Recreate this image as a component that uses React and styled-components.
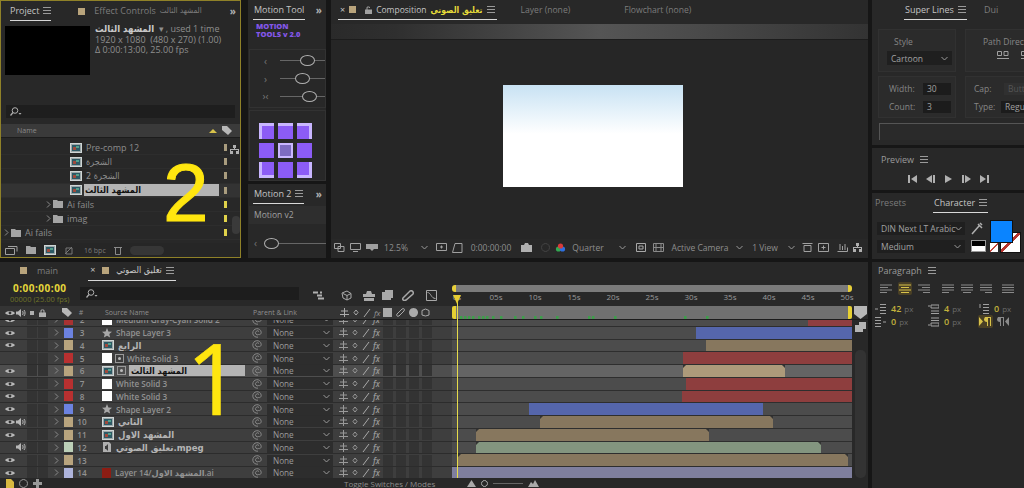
import React from 'react';
import styled, { createGlobalStyle } from 'styled-components';

const GlobalStyle = createGlobalStyle`
  html, body { margin: 0; padding: 0; background: #161616; }
  body { font-family: "Open Sans", "DejaVu Sans", sans-serif; font-size: 9px; color: #a8a8a8; }
  * { box-sizing: border-box; }
  svg { flex: none; }
`;

const Page = styled.div`
  position: relative;
  width: 1024px;
  height: 488px;
  display: flex;
  overflow: hidden;
  background: #161616;
`;
const LeftArea = styled.div`
  width: 868px;
  display: flex;
  flex-direction: column;
`;
const TopRow = styled.div`
  height: 258px;
  display: flex;
`;
const Panel = styled.div`
  background: #282828;
  display: flex;
  flex-direction: column;
  position: relative;
  overflow: hidden;
  height: ${p => (p.$h ? `${p.$h}px` : 'auto')};
  ${p => !p.$h && 'flex: 1;'}
  ${p => p.$active && 'border: 1px solid #8f8128;'}
`;
const TabBar = styled.div`
  height: 20px;
  flex: none;
  display: flex;
  align-items: flex-start;
  padding-left: ${p => p.$pl || 0}px;
  position: relative;
`;
const Tab = styled.div`
  height: 20px;
  line-height: 20px;
  margin-left: ${p => p.$ml || 0}px;
  padding: 0 ${p => p.$pad || 0}px;
  white-space: nowrap;
  display: flex;
  align-items: center;
  gap: 4px;
  font-size: ${p => p.$fs || 9}px;
  color: ${p => (p.$on ? '#c4c4c4' : '#7c7c7c')};
  border-bottom: ${p => (p.$on ? '1.5px solid #d8d8d8' : 'none')};
`;
const PlainTitle = styled.div`
  height: ${p => p.$h}px;
  flex: none;
  display: flex;
  align-items: center;
  gap: 6px;
  padding-left: ${p => p.$pl}px;
  color: #9a9a9a;
`;
const More = styled.span`
  position: absolute;
  right: 5px;
  top: 3px;
  font-size: 10px;
  font-weight: 700;
  letter-spacing: -1px;
  color: #b0b0b0;
`;
const Burger = () => (
  <svg width="8" height="7" viewBox="0 0 8 7"><path d="M0 .5h8M0 3.5h8M0 6.5h8" stroke="#9a9a9a" strokeWidth="1" /></svg>
);
const Swatch = styled.span`
  display: inline-block;
  width: ${p => p.$s || 7}px;
  height: ${p => p.$s || 7}px;
  margin-left: ${p => p.$ml || 0}px;
  background: ${p => p.$c};
  flex: none;
`;
const Arabic = styled.span`
  font-family: "DejaVu Sans Condensed", "DejaVu Sans", sans-serif;
  font-weight: ${p => (p.$bold ? 700 : 400)};
  font-size: ${p => p.$size || 9}px;
  color: ${p => p.$c || 'inherit'};
  margin-left: ${p => p.$ml || 0}px;
`;

/* ---------- little drawings ---------- */
const Comp = () => (
  <svg width="12" height="10" viewBox="0 0 12 10">
    <rect x=".5" y=".5" width="11" height="9" fill="#9aa6a8" stroke="#cfd6d6" />
    <rect x="2" y="2" width="8" height="6" fill="#2d5a66" />
    <rect x="3" y="4" width="3" height="3" fill="#a04a3c" />
    <rect x="6" y="3" width="3" height="2" fill="#54a08c" />
  </svg>
);
const Folder = () => (
  <svg width="10" height="8" viewBox="0 0 10 8"><path d="M0 0h4l1 1h5v7H0z" fill="#a4a4a4" /></svg>
);
const Chevron = ({ c = '#8a8a8a', s = 5 }) => (
  <svg width={s} height={s + 2} viewBox="0 0 5 7"><path d="M1 .5 4 3.5 1 6.5" fill="none" stroke={c} strokeWidth="1" /></svg>
);
const Down = ({ c = '#9a9a9a' }) => (
  <svg width="7" height="5" viewBox="0 0 7 5"><path d="M.5 1 3.5 4 6.5 1" fill="none" stroke={c} strokeWidth="1" /></svg>
);
const Eye = () => (
  <svg width="10" height="6" viewBox="0 0 10 6"><path d="M0 3C2 .2 8 .2 10 3 8 5.8 2 5.8 0 3z" fill="#b8b8b8" /><circle cx="5" cy="3" r="1.4" fill="#333" /></svg>
);
const Speaker = () => (
  <svg width="10" height="8" viewBox="0 0 10 8"><path d="M0 2.5h2L5 0v8L2 5.5H0z" fill="#b8b8b8" /><path d="M6.5 2c.8 1 .8 3 0 4M8 1c1.4 1.7 1.4 4.3 0 6" fill="none" stroke="#b8b8b8" /></svg>
);
const StarIcon = () => (
  <svg width="10" height="10" viewBox="0 0 10 10"><path d="M5 0 6.4 3.4 10 3.7 7.3 6 8.1 9.6 5 7.7 1.9 9.6 2.7 6 0 3.7 3.6 3.4z" fill="#a8a8a8" /></svg>
);
const Spiral = () => (
  <svg width="10" height="10" viewBox="0 0 10 10"><path d="M7 3.5A2 2 0 1 0 6.6 6.5C8 7 9.4 5.8 9.2 4.2 8.9 1.8 6.8.5 4.6.7 2.3 1 .6 3 .8 5.3 1 7.8 3.3 9.5 6 9.2" fill="none" stroke="#8e8e8e" strokeWidth=".9" /></svg>
);
const Glyph = ({ w = 11, h = 9, d, c = '#a0a0a0', fill, sw = 1 }) => (
  <svg width={w} height={h} viewBox={`0 0 ${w} ${h}`}><path d={d} fill={fill || 'none'} stroke={fill ? 'none' : c} strokeWidth={sw} /></svg>
);
const SearchGlyph = () => (
  <svg width="12" height="9" viewBox="0 0 12 9"><circle cx="5" cy="3.5" r="2.8" fill="none" stroke="#b0b0b0" /><path d="M3 5.5 .5 8.5" stroke="#b0b0b0" strokeWidth="1.2" /><path d="M8.5 6h3L10 7.8z" fill="#b0b0b0" /></svg>
);
const TagIcon = () => <Glyph w={10} h={9} fill="#b8b8b8" d="M0 0h5l5 5-4 4-6-5z" />;
const FlowIcon = () => <Glyph w={9} h={9} fill="#b0b0b0" d="M3 0h3v3H5v1h4v2h0v3H6V6h2V5H1v1h2v3H0V6h0V4h4V3H3z" />;
const Marker = styled.span`
  position: absolute;
  font-family: ${p => p.$font}, sans-serif;
  color: #ffe60f;
  -webkit-text-stroke: ${p => p.$stroke}px #ffe60f;
  left: ${p => p.$x}px;
  top: ${p => p.$y}px;
  font-size: ${p => p.$size}px;
  line-height: 1;
  pointer-events: none;
`;

/* ---------- project ---------- */
const ProjectPanel = styled(Panel)`
  width: 241px;
`;
const ProjectInfo = styled.div`
  height: 84px;
  display: flex;
  padding: 5px 0 0 4px;
  gap: 5px;
  flex: none;
`;
const Thumb = styled.div`
  width: 85px;
  height: 49px;
  background: #000;
`;
const InfoText = styled.div`
  line-height: 10.5px;
  font-size: 9px;
  color: #8f8f8f;
  margin-top: -2px;
`;
const SearchBox = styled.div`
  height: 13px;
  margin: 0 5px;
  flex: none;
  background: #1e1e1e;
  display: flex;
  align-items: center;
  padding-left: 4px;
`;
const NameHead = styled.div`
  height: 14px;
  margin-top: 6px;
  flex: none;
  background: #3a3a3a;
  border-bottom: 1px solid #1c1c1c;
  display: flex;
  align-items: center;
  justify-content: space-between;
  padding: 0 8px 0 16px;
  font-size: 7px;
  color: #8a8a8a;
`;
const HeadIcons = styled.span`
  display: flex;
  align-items: center;
  gap: 5px;
`;
const ProjectList = styled.div`
  flex: 1;
  padding-top: 3px;
  position: relative;
  overflow: hidden;
`;
const ProjectRow = styled.div`
  height: 14.2px;
  display: flex;
  align-items: center;
  gap: 2px;
  padding-left: ${p => p.$indent}px;
  background: ${p => (p.$sel ? '#333' : 'transparent')};
  color: #8d8d8d;
  font-size: 9px;
  position: relative;
  border-bottom: 1px solid #2d2d2d;
`;
const RowName = styled.span`
  margin-left: 2px;
  white-space: nowrap;
  ${p => p.$sel && 'background:#b4b4b4;color:#111;width:135px;height:12px;line-height:12px;padding-left:1px;margin-left:0;'}
`;
const ChipCol = styled.span`
  position: absolute;
  left: 223px;
  top: 3px;
  width: 3px;
  height: 7px;
  background: ${p => p.$c};
`;
const FlowMark = styled.span`
  position: absolute;
  left: 229px;
  top: 3px;
`;
const ProjectFoot = styled.div`
  height: 14px;
  flex: none;
  display: flex;
  align-items: center;
  gap: 8px;
  padding-left: 4px;
  font-size: 7px;
  color: #7a7a7a;
  background: #262626;
`;
const Pill = styled.span`
  width: 34px;
  height: 9px;
  border-radius: 5px;
  background: #363636;
`;
const Scroll = styled.span`
  position: absolute;
  right: 0;
  top: 78px;
  width: 8px;
  height: 18px;
  border-radius: 4px;
  background: #3a3a3a;
`;

/* ---------- motion tools ---------- */
const MotionCol = styled.div`
  width: 78px;
  margin-left: 7px;
  height: 258px;
  display: flex;
  flex-direction: column;
  gap: 3px;
`;
const MotionBrand = styled.div`
  height: 29px;
  padding: 2px 0 0 8px;
  font-size: 7.5px;
  line-height: 8px;
  font-weight: 800;
  color: #8457e8;
  flex: none;
`;
const SliderBox = styled.div`
  height: 59px;
  margin-left: 1px;
  border: 1px solid #323232;
  display: flex;
  flex-direction: column;
  justify-content: space-evenly;
  padding-left: 8px;
  flex: none;
`;
const SliderLine = styled.div`
  display: flex;
  align-items: center;
  height: 14px;
  font-size: 10px;
  color: #777;
  gap: 7px;
  margin-top: ${p => p.$mt || 0}px;
  padding-left: ${p => p.$pl || 0}px;
  span:first-child { width: 15px; text-align: center; flex: none; }
`;
const Track = styled.div`
  flex: 1;
  height: 1px;
  background: #666;
  position: relative;
`;
const Knob = styled.span`
  position: absolute;
  left: ${p => p.$x}px;
  top: -5px;
  width: 11px;
  height: 11px;
  border-radius: 50%;
  background: #282828;
  border: 1.5px solid #b0b0b0;
`;
const GridBox = styled.div`
  margin: 2px 0 0 1px;
  border: 1px solid #323232;
  display: grid;
  grid-template-columns: repeat(3, 15px);
  grid-auto-rows: 15.5px;
  gap: 4.2px;
  padding: 12px 0 0 9px;
  flex: 1;
`;
const Pad = styled.span`
  background: #8c5cf5;
  box-shadow: ${p => p.$inner};
  ${p => p.$center && 'background:#7e6cc0;border:2.5px solid #c9b6ff;'}
`;
const V2Box = styled.div`
  height: 18px;
  line-height: 18px;
  padding-left: 5px;
  margin: 2px 0 0 1px;
  background: #2e2e2e;
  color: #a0a0a0;
  font-size: 8.5px;
  flex: none;
`;

/* ---------- composition ---------- */
const CompPanel = styled(Panel)`
  flex: none;
  width: 537px;
  margin-left: 5px;
`;
const TimeStrip = styled.div`
  height: 16px;
  margin-top: 4px;
  flex: none;
  background: linear-gradient(90deg, #2a2a2a 0%, #2f2f2f 12%, #555 50%, #4a4a4a 68%, #333 100%);
  border-bottom: 1px solid #1c1c1c;
`;
const Viewer = styled.div`
  flex: 1;
  background: #262626;
  display: flex;
  padding: 45px 0 0 172px;
`;
const Frame = styled.div`
  width: 180px;
  height: 102px;
  background: linear-gradient(180deg, #c8e2f3 0%, #e6f2fa 26%, #ffffff 48%);
`;
const CompTools = styled.div`
  height: 17px;
  flex: none;
  display: flex;
  align-items: center;
  background: #282828;
  font-size: 8.5px;
  color: #8e8e8e;
  margin-bottom: 2px;
`;
const Slot = styled.span`
  display: inline-flex;
  align-items: center;
  justify-content: center;
  flex: none;
  width: ${p => p.$w}px;
  white-space: nowrap;
`;

/* ---------- timeline ---------- */
const TimelinePanel = styled(Panel)`
  margin-top: 4px;
`;
const TimeTabs = styled.div`
  height: 17px;
  flex: none;
  display: flex;
  align-items: center;
  padding-left: 20px;
`;
const TimeControls = styled.div`
  height: 27px;
  flex: none;
  display: flex;
`;
const TimeCode = styled.div`
  width: 80px;
  padding-left: 10px;
  padding-top: 3px;
  div:first-child { color: #e4d63b; font-weight: 700; font-size: 10px; line-height: 12px; letter-spacing: .5px; padding-left: 3px; }
  div:last-child { color: #6f7428; font-size: 7.5px; line-height: 10px; }
`;
const TimeSearch = styled.div`
  width: 219px;
  height: 13px;
  margin-top: 8px;
  background: #1d1d1d;
  display: flex;
  align-items: center;
  padding-left: 6px;
`;
const ToolRow = styled.div`
  width: 153px;
  display: flex;
  align-items: center;
  padding: 6px 0 0 14px;
`;
const ToolGap = styled.span`
  width: ${p => p.$w}px;
  flex: none;
`;
const NavCol = styled.div`
  width: 400px;
  padding-top: 6px;
  position: relative;
`;
const NavBar = styled.div`
  height: 7px;
  background: #7b7b7b;
  border-left: 4px solid #e7cf3a;
  border-right: 4px solid #e7cf3a;
  border-radius: 3px;
`;
const Ruler = styled.div`
  display: flex;
  margin-left: -14.5px;
`;
const Tick = styled.span`
  width: 39px;
  flex: none;
  text-align: center;
  font-size: 8px;
  line-height: 10px;
  color: #9a9a9a;
`;
const HeadRow = styled.div`
  height: 14px;
  flex: none;
  display: flex;
  background: #3a3a3a;
  border-bottom: 1px solid #1b1b1b;
`;
const HeadLeft = styled.div`
  width: 452px;
  display: flex;
  align-items: center;
  padding-left: 5px;
  font-size: 7px;
  color: #8f8f8f;
  background: #343434;
`;
const WorkBar = styled.div`
  width: 400px;
  height: 13px;
  background: #707070;
  border-left: 4px solid #e6d033;
  border-right: 4px solid #e6d033;
  border-radius: 2px;
  display: flex;
  align-items: flex-end;
`;
const HeadEnd = styled.div`
  flex: 1;
  background: #282828;
  display: flex;
  justify-content: center;
`;
const RowsWrap = styled.div`
  flex: 1;
  display: flex;
  min-height: 0;
`;
const Rows = styled.div`
  width: 852px;
  overflow: hidden;
  background: #2c2c2c;
`;
const Row = styled.div`
  height: 12.75px;
  display: flex;
  font-size: 8.2px;
  font-weight: 600;
  color: #929292;
  ${p => p.$first && 'margin-top:-6px;'}
`;
const RowLeft = styled.div`
  width: 452px;
  flex: none;
  display: flex;
  align-items: center;
  background: ${p => (p.$sel ? '#4e4e4e' : '#3e3e3e')};
  border-bottom: 1px solid #2c2c2c;
  padding-left: 5px;
`;
const Cell = styled.span`
  display: inline-flex;
  align-items: center;
  justify-content: ${p => (p.$start ? 'flex-start' : 'center')};
  flex: none;
  width: ${p => p.$w}px;
  height: 100%;
  white-space: nowrap;
  overflow: hidden;
  ${p => p.$dark && 'background:#333;margin-right:1px;height:11px;'}
`;
const NameCell = styled(Cell)`
  gap: 4px;
`;
const Highlight = styled.span`
  background: #b4b4b4;
  color: #111;
  width: 120px;
  height: 11px;
  line-height: 11px;
  padding-left: 2px;
  flex: none;
`;
const LabelChip = styled.span`
  width: 9px;
  height: 10px;
  background: ${p => p.$c};
`;
const Solid = styled.span`
  width: 10px;
  height: 10px;
  background: #fff;
  flex: none;
`;
const SolidMark = styled.span`
  width: 9px;
  height: 9px;
  border: 1px solid #999;
  margin: 0 -1px;
  flex: none;
  display: inline-flex;
  align-items: center;
  justify-content: center;
  &::after { content: ""; width: 3px; height: 3px; background: #bbb; border-radius: 50%; }
`;
const ParentSelect = styled.span`
  width: 66px;
  height: 11px;
  background: #2d2d2d;
  margin-left: 5px;
  padding: 0 3px 0 6px;
  display: flex;
  align-items: center;
  justify-content: space-between;
  flex: none;
  color: #9c9c9c;
  font-weight: 400;
`;
const Switches = styled.span`
  display: flex;
  align-items: center;
  gap: 3px;
  margin-left: 6px;
  color: #999;
  font-style: italic;
  font-size: 8px;
  flex: none;
`;
const SwitchBox = styled.span`
  width: 10px;
  height: 11px;
  background: #333;
  flex: none;
`;
const TrackCell = styled.div`
  width: 400px;
  flex: none;
  background: ${p => (p.$sel ? '#646464' : '#4c4c4c')};
  border-bottom: 1px solid #2e2e2e;
  display: flex;
`;
const Clip = styled.div`
  position: relative;
  height: 100%;
  margin-left: ${p => p.$from}px;
  width: ${p => p.$len}px;
  background: ${p => p.$c};
  border-radius: ${p => (p.$round ? '3px 3px 0 0' : '0')};
  ${p => p.$round && `
    &::before, &::after {
      content: "";
      position: absolute;
      top: 0;
      border-top: 3px solid #333;
    }
    &::before { left: 0; border-right: 3px solid transparent; }
    &::after { right: 0; border-left: 3px solid transparent; }
  `}
`;
const SideScroll = styled.div`
  flex: 1;
  background: #282828;
  padding: 2px 2px 0;
  display: flex;
  flex-direction: column;
  align-items: center;
`;
const Thumb2 = styled.span`
  width: 11px;
  flex: 1;
  margin: 18px 0 0;
  border-radius: 5px;
  background: #333;
`;
const BottomBar = styled.div`
  height: 10px;
  flex: none;
  display: flex;
  align-items: center;
  padding-left: 6px;
  gap: 5px;
  font-size: 8px;
  color: #888;
  background: #282828;
`;
const ToggleLabel = styled.span`
  margin-left: 297px;
  width: 118px;
  flex: none;
  color: #8e8e8e;
`;
const ZoomLine = styled.span`
  width: 30px;
  height: 1px;
  background: #666;
`;
const Playhead = styled.span`
  position: absolute;
  left: 457px;
  top: 295px;
  width: 1px;
  height: 183px;
  background: #e6db4a;
  &::before {
    content: "";
    position: absolute;
    left: -4px;
    top: 0;
    border-left: 4.5px solid transparent;
    border-right: 4.5px solid transparent;
    border-top: 9px solid #e6cc33;
  }
`;

/* ---------- right column ---------- */
const RightCol = styled.div`
  flex: 1;
  margin-left: 4px;
  display: flex;
  flex-direction: column;
  gap: 3px;
`;
const SuperBody = styled.div`
  display: grid;
  grid-template-columns: 78px 78px;
  column-gap: 9px;
  row-gap: 4px;
  padding: 9px 0 0 6px;
`;
const GroupBox = styled.div`
  height: ${p => p.$h}px;
  background: #2b2b2b;
  border: 1px solid #313131;
  padding: ${p => p.$pad || '6px 0 0 8px'};
  font-size: 8.5px;
  color: #868686;
  overflow: hidden;
  white-space: nowrap;
`;
const GroupTitle = styled.div`
  margin-left: ${p => p.$ml}px;
  line-height: 12px;
`;
const SelectBox = styled.div`
  height: ${p => p.$h || 14}px;
  width: ${p => p.$w}px;
  margin-top: ${p => p.$mt || 0}px;
  background: #1f1f1f;
  display: flex;
  align-items: center;
  justify-content: space-between;
  padding: 0 4px;
  color: #a2a2a2;
  font-size: 8.5px;
  white-space: nowrap;
  flex: none;
`;
const FieldRow = styled.div`
  display: flex;
  align-items: center;
  height: 13px;
  margin-bottom: 5px;
`;
const FieldLabel = styled.span`
  width: ${p => p.$w}px;
  flex: none;
`;
const FieldInput = styled.span`
  width: 28px;
  height: 12px;
  line-height: 12px;
  background: ${p => (p.$off ? '#303030' : '#1c1c1c')};
  padding-left: 4px;
  color: ${p => (p.$off ? '#555' : '#a0a0a0')};
  flex: none;
`;
const DirIcons = styled.div`
  display: flex;
  gap: 12px;
  margin: 3px 0 0 14px;
`;
const TextBar = styled.div`
  margin: 5px 0 0 7px;
  height: 17px;
  border-top: 1px solid #555;
  border-left: 1px solid #555;
  background: #2a2a2a;
`;
const PreviewBody = styled.div`
  display: flex;
  gap: 9px;
  padding: 5px 0 0 36px;
  align-items: center;
`;
const CharBody = styled.div`
  padding: 9px 0 0 5px;
  display: grid;
  grid-template-columns: 94px 20px 40px;
  grid-template-rows: 13px 13px;
  row-gap: 5px;
  position: relative;
  height: 45px;
`;
const FillBox = styled.span`
  position: absolute;
  left: 118px;
  top: 7px;
  width: 23px;
  height: 23px;
  background: #0a84ff;
  border: 1px solid #111;
  z-index: 1;
`;
const StrokeBox = styled.span`
  position: absolute;
  left: 128px;
  top: 19px;
  width: 21px;
  height: 21px;
  background: linear-gradient(135deg, #fff 44%, #b8352f 44%, #b8352f 54%, #fff 54%);
  border: 1px solid #111;
`;
const NoneBox = styled.span`
  position: absolute;
  left: 118px;
  top: 30px;
  width: 8px;
  height: 9px;
  background: linear-gradient(135deg, #fff 42%, #c2473f 42%, #c2473f 56%, #fff 56%);
`;
const Contrast = styled.span`
  width: 15px;
  height: 12px;
  border: 1px solid #999;
  background: linear-gradient(180deg, #000 50%, #fff 50%);
`;
const ParaIcons = styled.div`
  display: flex;
  align-items: center;
  padding: 3px 0 0 4px;
`;
const ParaSlot = styled.span`
  display: inline-flex;
  align-items: center;
  justify-content: center;
  width: 19px;
  flex: none;
  margin-left: ${p => p.$ml || 0}px;
`;
const AlignOn = styled.span`
  display: inline-flex;
  background: #4a4025;
  border-radius: 2px;
  padding: 2px 1px;
`;
const ParaGrid = styled.div`
  display: grid;
  grid-template-columns: 53px 50px 50px;
  grid-auto-rows: 13px;
  padding: 7px 0 0 3px;
  font-size: 8px;
  color: #6a6a6a;
`;
const ParaField = styled.span`
  display: flex;
  align-items: center;
  gap: 3px;
  b { color: #c2b13c; font-weight: 600; font-size: 9px; margin-left: 2px; }
`;

const ticks = ['0s', '05s', '10s', '15s', '20s', '25s', '30s', '35s', '40s', '45s', '50s'];
const corner = ['inset 3px 3px 0 #c9b6ff', 'inset 0 3px 0 #c9b6ff', 'inset -3px 3px 0 #c9b6ff', 'none', 'none', 'none', 'inset 3px -3px 0 #c9b6ff', 'none', 'inset -3px -3px 0 #c9b6ff'];
const greenMarks = [4, 8, 12, 16, 22, 26, 30, 36, 44, 58, 66, 78, 84, 100, 132, 136, 158, 228, 250];

const layers = [
  { n: 2, label: '#a83232', vis: 1, name: 'Medium Gray-Cyan Solid 2', icon: 'solid', clip: [356, 44, '#8f3e40'], first: true },
  { n: 3, label: '#6c82e0', vis: 1, name: 'Shape Layer 3', icon: 'star', clip: [244, 156, '#5566ac'] },
  { n: 4, label: '#b8a47e', vis: 1, name: 'الرابع', icon: 'comp', big: true, clip: [254, 146, '#87775e'] },
  { n: 5, label: '#b83030', vis: 0, name: 'White Solid 3', icon: 'solidmark', clip: [231, 169, '#8e3e3e'] },
  { n: 6, label: '#b8a47e', vis: 1, name: 'المشهد الثالث', icon: 'compmark', sel: true, clip: [231, 102, '#ad9a7a', 1] },
  { n: 7, label: '#b83030', vis: 1, name: 'White Solid 3', icon: 'solid', clip: [234, 166, '#8e3e3e'] },
  { n: 8, label: '#b83030', vis: 1, name: 'White Solid 3', icon: 'solid', clip: [230, 170, '#8e3e3e'] },
  { n: 9, label: '#6c82e0', vis: 1, name: 'Shape Layer 2', icon: 'star', clip: [77, 234, '#5566ac'] },
  { n: 10, label: '#b8a47e', vis: 1, audio: 1, name: 'الثاني', icon: 'comp', big: true, clip: [88, 233, '#87775e', 1] },
  { n: 11, label: '#b8a47e', vis: 1, name: 'المشهد الاول', icon: 'comp', big: true, clip: [24, 233, '#87775e', 1] },
  { n: 12, label: '#bcd0b8', audio: 1, name: 'تعليق الصوتي.mpeg', icon: 'audio', big: true, clip: [24, 345, '#83957f', 1] },
  { n: 13, label: '#b8a47e', vis: 1, name: '', icon: '', clip: [6, 390, '#87775e', 1] },
  { n: 14, label: '#aeb4dc', vis: 1, name: 'Layer 14/المشهد الاول.ai', icon: 'ai', clip: [0, 400, '#7f7f9e'] },
];

function LayerIcon({ kind }) {
  if (kind === 'star') return <StarIcon />;
  if (kind === 'comp') return <Comp />;
  if (kind === 'solid') return <Solid />;
  if (kind === 'solidmark') return <><Solid /><SolidMark /></>;
  if (kind === 'compmark') return <><Comp /><SolidMark /></>;
  if (kind === 'audio') return <Glyph w={10} h={10} fill="#b0b0b0" d="M1 0h6l2 2v8H1zM3 4v3h1l2 2V2L4 4z" />;
  if (kind === 'ai') return <Glyph w={9} h={10} fill="#8c1d14" d="M0 0h9v10H0z" />;
  return null;
}

function LayerRow({ l }) {
  let name = <span>{l.name}</span>;
  if (l.sel) name = <Highlight><Arabic $bold>{l.name}</Arabic></Highlight>;
  if (l.big) name = <Arabic $bold $size={9.5} $c="#b4b4b4">{l.name}</Arabic>;
  return (
    <Row $first={l.first}>
      <RowLeft $sel={l.sel}>
        <Cell $w={10}>{l.vis ? <Eye /> : null}</Cell>
        <Cell $w={11}>{l.audio ? <Speaker /> : null}</Cell>
        <Cell $w={1} />
        <Cell $w={10} $dark />
        <Cell $w={10} $dark />
        <Cell $w={14}><Chevron /></Cell>
        <Cell $w={10}><LabelChip $c={l.label} /></Cell>
        <Cell $w={18}>{l.n}</Cell>
        <Cell $w={11} />
        <NameCell $w={143} $start>
          <LayerIcon kind={l.icon} />
          {name}
        </NameCell>
        <Cell $w={6} />
        <Cell $w={11}><Spiral /></Cell>
        <ParentSelect>None <Down /></ParentSelect>
        <Switches>
          <Glyph w={9} h={9} c="#999" d="M4.5 0v9M1 3h7M0 6.5h9" />
          <Glyph w={8} h={9} c="#999" d="M4 2 6 4.5 4 7 2 4.5z" />
          <Glyph w={8} h={9} c="#aaa" d="M1 9 7 1" />
          <span>fx</span>
          <SwitchBox /><SwitchBox /><SwitchBox /><SwitchBox />
        </Switches>
      </RowLeft>
      <TrackCell $sel={l.sel}>
        <Clip $from={l.clip[0]} $len={l.clip[1]} $c={l.clip[2]} $round={l.clip[3]} />
      </TrackCell>
    </Row>
  );
}

function ProjectItem({ indent, sel, icon, chip, name, chevron, flow }) {
  return (
    <ProjectRow $indent={indent} $sel={sel}>
      {chevron && <Chevron />}
      {icon === 'folder' ? <Folder /> : <Comp />}
      <RowName $sel={sel}>{name}</RowName>
      <ChipCol $c={chip} />
      {flow && <FlowMark><FlowIcon /></FlowMark>}
    </ProjectRow>
  );
}

export default function App() {
  return (
    <Page>
      <GlobalStyle />
      <LeftArea>
        <TopRow>
          <ProjectPanel $active>
            <TabBar $pl={9}>
              <Tab $on>Project <Burger /></Tab>
              <Tab $ml={27}>
                <Swatch $c="#b9a47c" />
                <Swatch $s={1} $c="transparent" />
                Effect Controls <Arabic $size={8}>المشهد الثالث</Arabic>
              </Tab>
              <More>»</More>
            </TabBar>
            <ProjectInfo>
              <Thumb />
              <InfoText>
                <Arabic $bold $size={9.5} $c="#c8c8c8">المشهد الثالث</Arabic> &nbsp;▾ , used 1 time<br />
                1920 x 1080 &nbsp;(480 x 270) (1.00)<br />
                Δ 0:00:13:00, 25.00 fps
              </InfoText>
            </ProjectInfo>
            <SearchBox><SearchGlyph /></SearchBox>
            <NameHead>
              Name
              <HeadIcons>
                <Glyph w={8} h={7} fill="#d8c24a" d="M0 6 4 2 8 6z" />
                <TagIcon />
              </HeadIcons>
            </NameHead>
            <ProjectList>
              <ProjectItem indent={69} chip="#a99c7e" name="Pre-comp 12" flow />
              <ProjectItem indent={69} chip="#a99c7e" name={<Arabic>الشجرة</Arabic>} />
              <ProjectItem indent={69} chip="#a99c7e" name={<Arabic>الشجرة 2</Arabic>} />
              <ProjectItem indent={69} chip="#a99c7e" name={<Arabic $bold>المشهد الثالث</Arabic>} sel />
              <ProjectItem indent={45} chip="#e0d24a" name="Ai fails" icon="folder" chevron />
              <ProjectItem indent={45} chip="#e0d24a" name="imag" icon="folder" chevron />
              <ProjectItem indent={3} chip="#e0d24a" name="Ai fails" icon="folder" chevron />
              <Scroll />
            </ProjectList>
            <ProjectFoot>
              <Glyph w={13} h={9} c="#a0a0a0" d="M.5 2.5h9v6h-9zM3 .5h9v5" />
              <Folder />
              <Comp />
              <Glyph w={12} h={9} c="#777" d="M1 8 8 1M2 2h6v6H2z" />
              <span>16 bpc</span>
              <Glyph w={8} h={9} c="#8a8a8a" d="M0 1.5h8M1.5 1.5v7h5v-7" />
              <Pill />
            </ProjectFoot>
          </ProjectPanel>

          <MotionCol>
            <Panel $h={181}>
              <TabBar $pl={5}><Tab $on $pad={1}>Motion Tool</Tab><More>»</More></TabBar>
              <MotionBrand>MOTION<br />TOOLS v 2.0</MotionBrand>
              <SliderBox>
                <SliderLine><span>‹</span><Track><Knob $x={19.5} /></Track></SliderLine>
                <SliderLine><span>›</span><Track><Knob $x={14.5} /></Track></SliderLine>
                <SliderLine><span>›‹</span><Track><Knob $x={21.5} /></Track></SliderLine>
              </SliderBox>
              <GridBox>
                {corner.map((c, i) => <Pad key={i} $inner={c} $center={i === 4} />)}
              </GridBox>
            </Panel>
            <Panel>
              <TabBar $pl={5}><Tab $on $pad={1}>Motion 2 <Burger /></Tab><More>»</More></TabBar>
              <V2Box>Motion v2</V2Box>
              <SliderLine $mt={12}>
                <span>‹</span>
                <Track><Knob $x={-6} /></Track>
              </SliderLine>
            </Panel>
          </MotionCol>

          <CompPanel>
            <TabBar $pl={7}>
              <Tab $on $pad={2}>
                <span>×</span><Swatch $c="#b9a47c" />
                <Swatch $s={1} $c="transparent" />
                <Glyph w={7} h={8} fill="#a0a0a0" d="M0 3.5h7V8H0zM1.5 3.5V1.5C1.5 0 5 0 5 1.5V2H4C4 1 2.5 1 2.5 2v1.5z" />
                <span style={{ fontSize: 8.5 }}>Composition</span>
                <Arabic $bold $size={8.6} $c="#e6dc3a">تعليق الصوتي</Arabic>
                <Burger />
              </Tab>
              <Tab $ml={24} $fs={8.6}>Layer (none)</Tab>
              <Tab $ml={54} $fs={8.6}>Flowchart (none)</Tab>
            </TabBar>
            <TimeStrip />
            <Viewer><Frame /></Viewer>
            <CompTools>
              <Slot $w={16}><Glyph w={11} h={9} c="#a0a0a0" d="M.5.5h6v5h-6zM4 3.5h6v5H4z" /></Slot>
              <Slot $w={16}><Glyph w={11} h={9} c="#a0a0a0" d="M.5.5h10v6H.5zM3 8.5h5" /></Slot>
              <Slot $w={18}><Glyph w={12} h={8} fill="#a0a0a0" d="M0 0h12v5H8L6 7 4 5H0z" /></Slot>
              <Slot $w={30}>12.5%</Slot>
              <Slot $w={26}><Down /></Slot>
              <Slot $w={8}><Glyph w={11} h={10} c="#a0a0a0" d="M.5.5h10v7H.5zM5.5 2.5v3M4 4h3" /></Slot>
              <Slot $w={24}><Glyph w={11} h={10} c="#a0a0a0" d="M3 .5h7v9H.5z" /></Slot>
              <Slot $w={44}>0:00:00:00</Slot>
              <Slot $w={26}><Glyph w={11} h={9} fill="#b0b0b0" d="M0 2h3l1-2h3l1 2h3v7H0z" /></Slot>
              <Slot $w={12}><Glyph w={9} h={9} c="#444" d="M4.5.5a4 4 0 1 0 .01 0z" /></Slot>
              <Slot $w={18}>
                <svg width="11" height="10" viewBox="0 0 11 10">
                  <circle cx="3.5" cy="6" r="2.6" fill="#33a853" />
                  <circle cx="7.5" cy="6" r="2.6" fill="#2f6fe0" />
                  <circle cx="5.5" cy="3" r="2.6" fill="#d83a3a" />
                </svg>
              </Slot>
              <Slot $w={38}>Quarter</Slot>
              <Slot $w={30}><Down /></Slot>
              <Slot $w={8}><Glyph w={10} h={9} c="#a8a8a8" d="M.5.5h9v8h-9zM3 3h4v3H3z" /></Slot>
              <Slot $w={26}><Glyph w={11} h={9} c="#8a8a8a" d="M.5.5h10v8H.5zM3 .5v8M8 .5v8M.5 4.5h10" /></Slot>
              <Slot $w={58}>Active Camera</Slot>
              <Slot $w={20}><Down /></Slot>
              <Slot $w={32}>1 View</Slot>
              <Slot $w={20}><Down /></Slot>
              <Slot $w={12}><Glyph w={11} h={9} c="#a0a0a0" d="M.5.5h10M2 2.5h7v6H2z" /></Slot>
              <Slot $w={20}><Glyph w={11} h={9} c="#a0a0a0" d="M.5.5h10v8H.5zM5.5 2.5v4M3.5 4.5h4" /></Slot>
              <Slot $w={18}><Glyph w={11} h={9} c="#a0a0a0" d="M.5 8.5h10v-4M3 1v6M5.5 3v4M8 1v6" /></Slot>
              <Slot $w={12}><FlowIcon /></Slot>
            </CompTools>
          </CompPanel>
        </TopRow>

        <TimelinePanel>
          <TimeTabs>
            <Swatch $c="#b9a47c" />
            <Tab $ml={10}>main</Tab>
            <Tab $ml={30} $on $pad={2}>
              <span>×</span><Swatch $c="#b9a47c" $ml={3} />
              <Arabic $ml={3} $c="#c8c8c8">تعليق الصوتي</Arabic>
              <Burger />
            </Tab>
          </TimeTabs>
          <TimeControls>
            <TimeCode>
              <div>0:00:00:00</div>
              <div>00000 (25.00 fps)</div>
            </TimeCode>
            <TimeSearch><SearchGlyph /></TimeSearch>
            <ToolRow>
              <Glyph w={12} h={9} c="#b0b0b0" d="M0 1.5h5M7 1.5h2M4 4.5h5M5 7.5h6" sw={2} />
              <ToolGap $w={14} />
              <Glyph w={13} h={11} c="#aaa" d="M3 3 8 1 12 3.5V8L8 10 4 8zM4 3.5 8 5.5 12 3.5M8 5.5V10" />
              <ToolGap $w={11} />
              <Glyph w={12} h={10} fill="#a8a8a8" d="M4 0h4l1 3h3v3H0V3h3zM1 7h10v3H1z" />
              <ToolGap $w={7} />
              <Glyph w={11} h={11} fill="#a8a8a8" d="M3 0h8v8H9v2H0V2h3z" />
              <ToolGap $w={9} />
              <Glyph w={12} h={11} c="#a8a8a8" d="M1 8 8 1c2-1 4 1 3 3L4 10c-2 1-4 0-3-2z" sw={1.5} />
              <ToolGap $w={12} />
              <Glyph w={11} h={11} c="#a8a8a8" d="M.5.5h10v10H.5zM1.5 2.5C5 2.5 5 8.5 9.5 8.5" />
            </ToolRow>
            <NavCol>
              <NavBar />
              <Ruler>{ticks.map(t => <Tick key={t}>{t}</Tick>)}</Ruler>
            </NavCol>
          </TimeControls>
          <HeadRow>
            <HeadLeft>
              <Cell $w={10}><Eye /></Cell>
              <Cell $w={11}><Speaker /></Cell>
              <Cell $w={11}><Swatch $c="#b0b0b0" $s={4} /></Cell>
              <Cell $w={10}><Glyph w={7} h={8} fill="#b0b0b0" d="M0 3.5h7V8H0zM1.5 3.5V1.5C1.5 0 5.5 0 5.5 1.5V3.5H4.5V2c0-1-2-1-2 0v1.5z" /></Cell>
              <Cell $w={15} />
              <Cell $w={10}><TagIcon /></Cell>
              <Cell $w={18}>#</Cell>
              <Cell $w={15} />
              <Cell $w={148} $start>Source Name</Cell>
              <Cell $w={81} $start>Parent &amp; Link</Cell>
              <Switches>
                <Glyph w={9} h={9} c="#aaa" d="M4.5 0v9M1 3h7M0 6.5h9" />
                <Glyph w={8} h={9} c="#aaa" d="M4 2 6 4.5 4 7 2 4.5z" />
                <Glyph w={8} h={9} c="#aaa" d="M1 9 7 1" />
                <span>fx</span>
                <Glyph w={10} h={9} fill="#aaa" d="M0 0h9v9H0z" />
                <Glyph w={10} h={9} c="#aaa" d="M1 6 6 1c2-1 3 0 2 2L3 8C1 9 0 7 1 6z" />
                <Glyph w={9} h={9} fill="#aaa" d="M4.5 0a4.5 4.5 0 1 0 .01 0z" />
                <Glyph w={9} h={9} c="#aaa" d="M1 2.5 4.5 1 8 2.5V7L4.5 8 1 7z" />
              </Switches>
            </HeadLeft>
            <WorkBar>
              <svg width="260" height="3" viewBox="0 0 260 3">
                {greenMarks.map(x => <rect key={x} x={x} y="0" width="2.5" height="3" fill="#3f9d4b" />)}
              </svg>
            </WorkBar>
            <HeadEnd>
              <Glyph w={13} h={13} fill="#b6b6b6" d="M0 0h13v8l-6.5 5L0 8z" />
            </HeadEnd>
          </HeadRow>
          <RowsWrap>
            <Rows>
              {layers.map(l => <LayerRow key={l.n} l={l} />)}
            </Rows>
            <SideScroll>
              <Glyph w={11} h={10} fill="#b4b4b4" d="M4 0h7v7H8v3H0V3h4z" />
              <Thumb2 />
            </SideScroll>
          </RowsWrap>
          <BottomBar>
            <Glyph w={8} h={9} fill="#d8b840" d="M0 0h5l3 3v6H0z" />
            <Glyph w={9} h={9} c="#999" d="M4.5.5a4 4 0 1 0 .01 0z" />
            <Glyph w={9} h={9} fill="#999" d="M3 0h3v3h3v3H6v3H3V6H0V3h3z" />
            <ToggleLabel>Toggle Switches / Modes</ToggleLabel>
            <Glyph w={9} h={7} fill="#aaa" d="M0 7 4.5 0 9 7z" />
            <Glyph w={7} h={7} c="#aaa" d="M3.5.5a3 3 0 1 0 .01 0z" />
            <ZoomLine />
            <Glyph w={11} h={7} fill="#aaa" d="M0 7 3 2l2 2 2-4 4 7z" />
          </BottomBar>
        </TimelinePanel>
      </LeftArea>

      <RightCol>
        <Panel $h={145}>
          <TabBar $pl={32}>
            <Tab $on $pad={1}>Super Lines <Burger /></Tab>
            <Tab $ml={17}>Dui</Tab>
            <More>»</More>
          </TabBar>
          <SuperBody>
            <GroupBox $h={43}>
              <GroupTitle $ml={7}>Style</GroupTitle>
              <SelectBox $w={65} $mt={3}>Cartoon <Down /></SelectBox>
            </GroupBox>
            <GroupBox $h={43} $pad="6px 0 0 17px">
              <GroupTitle $ml={0}>Path Direc</GroupTitle>
              <DirIcons>
                <Glyph w={12} h={10} c="#a0a0a0" d="M.5.5h4v4h-4zM7 .5h4v4H7zM0 7.5h12" />
                <Glyph w={12} h={10} c="#a0a0a0" d="M.5.5h4v4h-4zM0 7.5h12" />
              </DirIcons>
            </GroupBox>
            <GroupBox $h={42} $pad="5px 0 0 10px">
              <FieldRow><FieldLabel $w={34}>Width:</FieldLabel><FieldInput>30</FieldInput></FieldRow>
              <FieldRow><FieldLabel $w={34}>Count:</FieldLabel><FieldInput>3</FieldInput></FieldRow>
            </GroupBox>
            <GroupBox $h={42} $pad="5px 0 0 8px">
              <FieldRow><FieldLabel $w={30}>Cap:</FieldLabel><FieldInput $off>Butt</FieldInput></FieldRow>
              <FieldRow><FieldLabel $w={27}>Type:</FieldLabel><FieldInput>Regu</FieldInput></FieldRow>
            </GroupBox>
          </SuperBody>
          <TextBar />
        </Panel>

        <Panel $h={42}>
          <PlainTitle $h={22} $pl={9}>Preview <Burger /></PlainTitle>
          <PreviewBody>
            <Glyph w={9} h={8} fill="#b0b0b0" d="M0 0h2v8H0zM9 0v8L3 4z" />
            <Glyph w={9} h={8} fill="#b0b0b0" d="M6 0v8L0 4zM7 0h2v8H7z" />
            <Glyph w={9} h={8} fill="#b0b0b0" d="M1 0v8l7-4z" />
            <Glyph w={9} h={8} fill="#b0b0b0" d="M0 0h2v8H0zM3 0v8l6-4z" />
            <Glyph w={9} h={8} fill="#b0b0b0" d="M0 0v8l6-4zM7 0h2v8H7z" />
          </PreviewBody>
        </Panel>

        <Panel $h={66}>
          <TabBar $pl={3}>
            <Tab>Presets</Tab>
            <Tab $ml={27} $on $pad={1}>Character <Burger /></Tab>
            <More>»</More>
          </TabBar>
          <CharBody>
            <SelectBox $w={88} $h={13}>DIN Next LT Arabic <Down /></SelectBox>
            <Glyph w={12} h={13} c="#b0b0b0" d="M1 12 8 4M7 2l4 4M9 1l2 2" sw={1.5} />
            <span />
            <SelectBox $w={88} $h={13}>Medium <Down /></SelectBox>
            <Contrast />
            <span />
            <FillBox />
            <StrokeBox />
            <NoneBox />
          </CharBody>
        </Panel>

        <Panel>
          <PlainTitle $h={17} $pl={6}>Paragraph <Burger /></PlainTitle>
          <ParaIcons>
            <ParaSlot><Glyph w={12} h={9} c="#8a8a8a" d="M0 1h12M0 3.5h8M0 6h12M0 8.5h7" /></ParaSlot>
            <ParaSlot><AlignOn><Glyph w={12} h={9} c="#d8c24a" d="M0 1h12M2 3.5h8M0 6h12M2 8.5h8" /></AlignOn></ParaSlot>
            <ParaSlot><Glyph w={12} h={9} c="#8a8a8a" d="M0 1h12M4 3.5h8M0 6h12M5 8.5h7" /></ParaSlot>
            <ParaSlot $ml={5}><Glyph w={12} h={9} c="#8a8a8a" d="M0 1h12M0 3.5h12M0 6h12M0 8.5h7" /></ParaSlot>
            <ParaSlot><Glyph w={12} h={9} c="#8a8a8a" d="M0 1h12M0 3.5h12M0 6h12M2 8.5h8" /></ParaSlot>
            <ParaSlot><Glyph w={12} h={9} c="#8a8a8a" d="M0 1h12M0 3.5h12M0 6h12M5 8.5h7" /></ParaSlot>
            <ParaSlot $ml={3}><Glyph w={12} h={9} c="#8a8a8a" d="M0 1h12M0 3.5h12M0 6h12M0 8.5h12" /></ParaSlot>
          </ParaIcons>
          <ParaGrid>
            <ParaField><Glyph w={11} h={10} c="#a0a0a0" d="M5 .5h6M5 3.5h6M5 6.5h6M5 9.5h6M0 5h3" /><b>42</b> px</ParaField>
            <ParaField><Glyph w={11} h={10} c="#a0a0a0" d="M3 1h8v3H3zM3 7h8M3 9.5h8M0 2h2" /><b>4</b> px</ParaField>
            <ParaField><Glyph w={11} h={10} c="#a0a0a0" d="M5 .5h6M5 3.5h6M5 6.5h6M5 9.5h6M2 0v4" /><b>0</b> px</ParaField>
            <ParaField><Glyph w={11} h={10} c="#a0a0a0" d="M0 .5h6M0 3.5h6M0 6.5h6M0 9.5h6M8 5h3" /><b>0</b> px</ParaField>
            <ParaField><Glyph w={11} h={10} c="#a0a0a0" d="M3 1h8M3 3.5h8M3 6h8v3H3zM0 8h2" /><b>0</b> px</ParaField>
            <ParaField>
              <AlignOn><Glyph w={13} h={9} fill="#d8c24a" d="M0 0l4 4.5L0 9zM6 0h6v9h-1V1H9v8H8V5C6 5 5 3.5 5 2.5S6 0 6 0z" /></AlignOn>
              <Glyph w={13} h={9} fill="#8a8a8a" d="M13 0 9 4.5 13 9zM2 0h6v9H7V1H5v8H4V5C2 5 1 3.5 1 2.5S2 0 2 0z" />
            </ParaField>
          </ParaGrid>
        </Panel>
      </RightCol>

      <Playhead />
      <Marker $x={163} $y={152} $size={82} $font='"Liberation Sans"' $stroke={1}>2</Marker>
      <Marker $x={186} $y={328} $size={98} $font='"Open Sans"' $stroke={0.5}>1</Marker>
    </Page>
  );
}
